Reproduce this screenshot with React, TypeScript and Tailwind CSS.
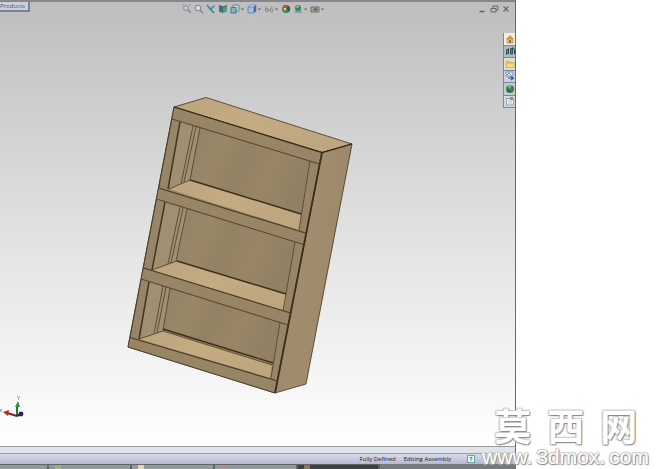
import React from 'react';

type IconProps = { children: React.ReactNode };

const Glyph = ({ children }: IconProps) => (
  <svg viewBox="0 0 10 10" className="block h-2.5 w-2.5" fill="none" aria-hidden="true">
    {children}
  </svg>
);

const tools = [
  {
    name: 'Zoom to Fit',
    menu: false,
    art: (
      <>
        <circle cx="4" cy="4" r="2.4" fill="#c5cdd3" stroke="#7f8d98" />
        <path d="M6 6l3 3" stroke="#8a7f82" strokeWidth="1.4" />
        <path d="M.5 2V.5H2M7 .5h1.500V2" stroke="#8b98a6" strokeWidth=".8" />
      </>
    ),
  },
  {
    name: 'Zoom to Area',
    menu: false,
    art: (
      <>
        <circle cx="4" cy="4" r="2.8" fill="#d4dadd" stroke="#76858f" />
        <path d="M6.200 6.200L9 9" stroke="#8c7f80" strokeWidth="1.500" />
      </>
    ),
  },
  {
    name: 'Previous View',
    menu: false,
    art: (
      <>
        <path d="M1 1l3 3 4-2-2 4 3 3-4-1-3-3z" fill="#8eb2bb" />
        <path d="M1 1l7 8M8.500 1.500L5 5" stroke="#467d95" strokeWidth="1.200" />
      </>
    ),
  },
  {
    name: 'Section View',
    menu: false,
    art: (
      <>
        <path d="M1 1.500l4 1.500v6L1 7.500z" fill="#34786c" />
        <path d="M5 3l4-1.500v6L5 9z" fill="#5e9486" />
        <path d="M1 1.500L5 3l4-1.500" stroke="#356376" />
      </>
    ),
  },
  {
    name: 'View Orientation',
    menu: true,
    art: (
      <>
        <path d="M3 1h6v6H3z" fill="#b7d1d6" stroke="#5a8490" strokeWidth=".8" />
        <path d="M1 3.500h5V9H1z" fill="#8cb4bd" stroke="#3e7382" strokeWidth=".9" />
      </>
    ),
  },
  {
    name: 'Display Style',
    menu: true,
    art: (
      <>
        <path d="M1 3l2.500-2H9L7 3z" fill="#d3e0f0" />
        <path d="M1 3h6v6H1z" fill="#a8bfe0" />
        <path d="M7 3l2-2v6L7 9z" fill="#3d62a8" />
        <path d="M1 3h6v6H1zM1 3l2.500-2H9v6L7 9M7 3l2-2" stroke="#5573ac" strokeWidth=".7" />
      </>
    ),
  },
  {
    name: 'Hide/Show Items',
    menu: true,
    art: (
      <>
        <circle cx="3" cy="6" r="1.500" stroke="#7a8289" />
        <circle cx="7.500" cy="6.500" r="1.500" stroke="#7a8289" />
        <path d="M1.500 5l1-3M6 5.500L7 3l2 1" stroke="#8b9196" strokeWidth=".8" />
      </>
    ),
  },
  {
    name: 'Edit Appearance',
    menu: false,
    art: (
      <>
        <circle cx="5" cy="5" r="4" fill="#3f8a4c" />
        <path d="M5 5L2 2.300A4 4 0 018 2.300z" fill="#c6453d" />
        <path d="M5 5l3-2.700A4 4 0 018 7.700z" fill="#37575c" />
        <circle cx="4" cy="5" r="1.300" fill="#d8d3c6" />
      </>
    ),
  },
  {
    name: 'Apply Scene',
    menu: true,
    art: (
      <>
        <path d="M1 9l2-3h5l1.500 3z" fill="#7ea597" />
        <circle cx="5" cy="4" r="3" fill="#3f8559" />
        <path d="M3 3a3 3 0 013-1.500L5 4z" fill="#b6d0b2" />
      </>
    ),
  },
  {
    name: 'View Settings',
    menu: true,
    art: (
      <>
        <path d="M1 3h8v5H1z" fill="#a0a890" stroke="#636d60" strokeWidth=".9" />
        <path d="M3 6l2-2 3 1-2 2z" fill="#576a59" />
      </>
    ),
  },
];

const paneTabs = [
  {
    name: 'Resources',
    style: 'bg-[#f1eee3]',
    art: (
      <>
        <path d="M1 5l4-4 4 4z" fill="#d69d3c" />
        <path d="M2 5h6v4H2z" fill="#ecc97a" stroke="#a47a35" strokeWidth=".6" />
        <path d="M4 6h2v3H4z" fill="#8b682f" />
      </>
    ),
  },
  {
    name: 'Design Library',
    style: 'bg-[#aeb9cd]',
    art: (
      <>
        <path d="M1 4l3-2v6L1 8.500zM5 2.500l3-1v7H5z" fill="#354d48" />
        <path d="M2 4l1 4M6 3l1 5" stroke="#71a36b" strokeWidth=".8" />
        <path d="M8 1.500l1.500 2V8" stroke="#25364a" />
      </>
    ),
  },
  {
    name: 'File Explorer',
    style: 'bg-[#e0dfcf]',
    art: (
      <>
        <path d="M1 2h3l1 1h4v5H1z" fill="#e0b84d" />
        <path d="M2 4h8L8.500 8.500H1z" fill="#f4dd83" stroke="#bd9536" strokeWidth=".5" />
      </>
    ),
  },
  {
    name: 'View Palette',
    style: 'bg-[#ccd4df]',
    art: (
      <>
        <path d="M1 1h7v4H1z" fill="#e8eff2" stroke="#5c7f9c" strokeWidth=".8" />
        <path d="M2 4l2-2 2 2" stroke="#60976b" />
        <path d="M3 7h5M6 5.500L8.500 7 6 9" stroke="#3452a5" strokeWidth="1.200" />
      </>
    ),
  },
  {
    name: 'Appearances',
    style: 'bg-[#bdcdd0]',
    art: (
      <>
        <circle cx="5" cy="5" r="4" fill="#348156" />
        <path d="M5 5L2 2a4 4 0 015-.500z" fill="#73bd6a" />
        <path d="M5 5l4 1-2 2.500z" fill="#b74e42" />
        <path d="M2 7h4" stroke="#234865" />
      </>
    ),
  },
  {
    name: 'Custom Properties',
    style: 'bg-[#d6dae0]',
    art: (
      <>
        <path d="M1.500 2.500h7V9h-7z" fill="#f1f2eb" stroke="#7e8e9c" strokeWidth=".8" />
        <path d="M5 1h3v3H5z" fill="#819b88" />
        <path d="M3 5h4M3 7h4" stroke="#abb1b3" strokeWidth=".7" />
      </>
    ),
  },
];

const tasks = [
  { dot: 'bg-transparent', style: 'w-[49px] bg-[#92999b]' },
  { dot: 'bg-[#a3af78]', style: 'w-[83px] bg-[#92999b]' },
  { dot: 'bg-[#ddd8ad]', style: 'w-[83px] bg-[#92999b]' },
  { dot: 'bg-[#b18c91]', style: 'w-[83px] bg-[#92999b]' },
  { dot: 'bg-[#8a7b4c]', style: 'w-[82px] bg-[#3d4042]' },
];

// one opening of the case: side wall, back panel, shelf and the seams between them
const bays = [
  {
    side: '180,121 200,128 190,180 169,189',
    back: '200,128 310,161 301,213 190,179',
    shelf: '169,189 190,180 301,214 299,230',
    post: 'M180 122L168 189',
    seams: 'M196 127L184 182M193 126L181 184M200 128L190 180M169 189L190 180M310 161L299 230',
    lip: 'M190 180L301 214',
  },
  {
    side: '164,202 188,209 177,261 152,270',
    back: '188,209 295,241 286,294 177,260',
    shelf: '152,270 177,261 286,294 283,311',
    post: 'M165 202L152 270',
    seams: 'M183 208L171 263M180 207L168 264M187 209L176 261M152 270L177 261M295 242L283 311',
    lip: 'M177 261L286 294',
  },
  {
    side: '149,282 170,288 163,331 139,339',
    back: '170,288 280,322 273,363 163,329',
    shelf: '139,339 163,331 272,365 270,378',
    post: 'M149 282L139 339',
    seams: 'M166 287L157 333M163 286L154 334M170 288L163 331M139 339L163 331M280 322L271 378M163 331L272 365',
    lip: 'M163 329L273 363',
  },
];

const Bookcase = () => (
  <svg
    viewBox="126 95 228 300"
    className="absolute left-[126px] top-[75px] h-[300px] w-[228px]"
    role="img"
    aria-label="Bookcase model"
  >
    <defs>
      <linearGradient id="panel" x1="0" x2="1" y2=".3">
        <stop offset="0" stopColor="#928264" />
        <stop offset=".3" stopColor="#998768" />
        <stop offset=".5" stopColor="#938163" />
        <stop offset=".75" stopColor="#998667" />
        <stop offset="1" stopColor="#928063" />
      </linearGradient>
      <linearGradient id="flank" x1="0" x2="1" y2=".2">
        <stop offset="0" stopColor="#9b896a" />
        <stop offset=".5" stopColor="#a18d6e" />
        <stop offset="1" stopColor="#9c896a" />
      </linearGradient>
      <linearGradient id="board" x1="0" x2="1" y2=".4">
        <stop offset="0" stopColor="#bba47c" />
        <stop offset=".5" stopColor="#c3ab82" />
        <stop offset="1" stopColor="#bea67e" />
      </linearGradient>
    </defs>
    <g stroke="#3d3425" strokeWidth=".8" strokeLinejoin="round">
      <path d="M174 107L206 97.500L352 144L322 152.500z" fill="url(#board)" />
      <path d="M322 152.500L352 144L306 384L275 393z" fill="url(#flank)" />
      <path d="M174 107L322 152.500L275 393L128 347z" fill="#978566" />
    </g>
    {bays.map((bay) => (
      <g key={bay.post} fill="none">
        <polygon points={bay.side} fill="#a08f70" />
        <polygon points={bay.back} fill="url(#panel)" />
        <polygon points={bay.shelf} fill="url(#board)" />
        <path d={bay.seams} stroke="#56482f" strokeWidth=".9" />
        <path d={bay.post} stroke="#443521" strokeWidth="1.500" />
        <path d={bay.lip} stroke="#3a2d1b" strokeWidth="1.400" />
      </g>
    ))}
    <g fill="#988566">
      <path d="M174 107L322 152.500L319.500 164L172 119z" />
      <path d="M158.500 188L305.500 233L303.500 244.500L156.500 199z" />
      <path d="M143.500 268L290.500 313L288 325L141 279z" />
      <path d="M130 337.500L277.500 381L275 393L128 347z" />
    </g>
    <g fill="none" stroke="#493b27" strokeWidth=".9">
      <path d="M172 119L319.500 164M156.500 199L303.500 244.500M141 279L288 325" />
      <path d="M158.500 188L305.500 233M143.500 268L290.500 313M130 337.500L277.500 381" strokeWidth="1.200" />
      <path d="M174 107L128 347L275 393" />
      <path d="M174 107L322 152.500L352 144" stroke="#35291a" strokeWidth="1.200" />
      <path d="M322 152.500L275 393" stroke="#3d2f1c" strokeWidth="1.800" />
    </g>
  </svg>
);

const Triad = () => (
  <svg viewBox="0 0 28 26" className="absolute bottom-[24px] left-0 h-[26px] w-7" aria-hidden="true">
    <path d="M17 20V9" stroke="#28752b" strokeWidth="2" />
    <path d="M15 11l3-6 2 6z" fill="#329337" />
    <path d="M17 20L7 17" stroke="#842322" strokeWidth="2" />
    <path d="M9 14l-6 2 5 4z" fill="#b22b2b" />
    <path d="M17 20l4-2" stroke="#22266c" strokeWidth="2" />
    <circle cx="21" cy="18" r="2.400" fill="#202477" />
    <path d="M17 0l1.500 2L20 0M18.500 2v2M0 13l2 3M2 13l-2 3" stroke="#a7a7a7" fill="none" />
  </svg>
);

const Toolbar = () => (
  <header className="grid h-5 grid-cols-[1fr_auto_1fr] border-t-2 border-[#85878b]">
    <div className="flex items-start">
      <button className="h-[10px] w-[30px] border-2 border-l-0 border-t-0 border-[#7c819b] bg-[#cbd0dd] text-left text-[6px] leading-[8px] text-[#49516f]">
        Products
      </button>
    </div>
    <div className="flex items-start gap-0.5 pr-2 pt-0.5">
      {tools.map((tool) => (
        <button key={tool.name} aria-label={tool.name} className="flex items-center">
          <Glyph>{tool.art}</Glyph>
          {tool.menu && (
            <svg viewBox="0 0 5 10" className="h-2.5 w-[5px]" aria-hidden="true">
              <path d="M1 4.500h3L2.500 6.500z" fill="#5e6266" />
            </svg>
          )}
        </button>
      ))}
    </div>
    <div className="flex items-start justify-end gap-0.5 pr-1 pt-0.5">
      <button aria-label="Minimize">
        <Glyph>
          <path d="M2.500 7.500h5" stroke="#55585e" strokeWidth="1.400" />
        </Glyph>
      </button>
      <button aria-label="Restore">
        <Glyph>
          <path d="M4 4V2h5v4H7M2 4.500h5V8H2zM2 4.500h5" stroke="#65686e" />
        </Glyph>
      </button>
      <button aria-label="Close">
        <Glyph>
          <path d="M2.500 2.500l5 5M7.500 2.500l-5 5" stroke="#65686e" strokeWidth="1.200" />
        </Glyph>
      </button>
    </div>
  </header>
);

const StatusBar = () => (
  <footer>
    <div className="h-2 border-y border-[#999b9f] bg-[#dfe4ed]" />
    <div className="flex h-[10px] items-center justify-end gap-2 bg-linear-to-b from-[#d9dbea] to-[#b6b8d0] pr-1.5 text-[6px] font-medium leading-[8px] text-[#1b1c22]">
      <span>Fully Defined</span>
      <span>Editing Assembly</span>
      <button aria-label="Help" className="ml-2 flex h-2 w-2 items-center justify-center border border-[#68a5a4] bg-[#e9f5f2] text-[6px] font-bold leading-[6px] text-[#286f73]">
        ?
      </button>
      <svg viewBox="0 0 10 10" className="ml-4 h-2.5 w-2.5" aria-hidden="true">
        <path d="M1 2l7-1 1 7-7 1z" fill="#d6b447" />
        <path d="M3 8l4-6" stroke="#77632b" strokeWidth="1.500" />
      </svg>
    </div>
    <nav className="flex h-[5px] overflow-hidden bg-[#777b80]" aria-label="Open windows">
      {tasks.map((task, idx) => (
        <button key={idx} aria-label={`Window ${idx + 1}`} className={`flex border-r-2 border-t border-[#60656a] pl-1.5 ${task.style}`}>
          <span className={`h-1 w-1.5 ${task.dot}`} />
        </button>
      ))}
    </nav>
  </footer>
);

const Watermark = () => (
  <div className="pointer-events-none absolute bottom-0 right-4 flex flex-col items-center text-white [text-shadow:1px_1px_1px_#888,-1px_-1px_1px_#ccc,1px_-1px_1px_#ccc,-1px_1px_1px_#bbb]">
    <div className="flex gap-4 font-['Noto_Sans_CJK_SC',sans-serif] text-[37px] font-bold leading-10">
      <span>莫</span>
      <span>西</span>
      <span>网</span>
    </div>
    <div className="flex gap-1 text-[21px] leading-6 font-['Liberation_Sans',sans-serif]">
      <span>www.</span>
      <span>3dmox.</span>
      <span>com</span>
    </div>
  </div>
);

export default function App() {
  return (
    <div className="relative h-screen overflow-hidden bg-white font-['Open_Sans',sans-serif]">
      <div className="flex h-full w-[77.6%] flex-col border-r border-[#66686b]">
        <div className="flex flex-1 flex-col bg-linear-to-b from-[#bebebe] via-[#e0e0e1] to-white">
          <Toolbar />
          <main className="relative flex flex-1 items-start justify-end pt-[13px]">
            <Bookcase />
            <Triad />
            <div className="grid h-[75px] w-3 grid-rows-6">
              {paneTabs.map((tab) => (
                <button
                  key={tab.name}
                  aria-label={tab.name}
                  className={`flex items-center justify-center border-b border-l border-[#7787a9] ${tab.style}`}
                >
                  <Glyph>{tab.art}</Glyph>
                </button>
              ))}
            </div>
          </main>
        </div>
        <StatusBar />
      </div>
      <Watermark />
    </div>
  );
}
